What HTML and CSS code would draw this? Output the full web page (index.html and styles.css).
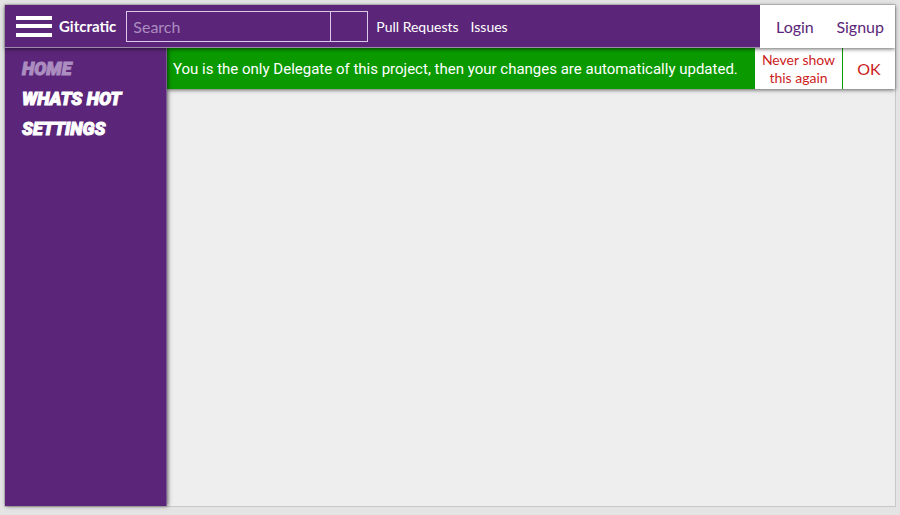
FILE: index.html
```html
<!DOCTYPE html>
<html lang="en">
<head>
<meta charset="utf-8">
<meta name="viewport" content="width=device-width, initial-scale=1">
<title>Gitcratic</title>
<link rel="stylesheet" href="styles.css">
</head>
<body>
<div class="app">
  <header class="topbar">
    <button class="menu" type="button" aria-label="Menu">
      <svg width="36" height="21" viewBox="0 0 36 21" aria-hidden="true"><path d="M0 0h36v4H0zM0 8h36v4H0zM0 17h36v4H0z" fill="#fff"/></svg>
    </button>
    <a class="brand" href="#">Gitcratic</a>
    <form class="search">
      <input type="search" placeholder="Search" aria-label="Search">
      <button type="submit" aria-label="Submit search"></button>
    </form>
    <nav class="links">
      <a href="#">Pull Requests</a>
      <a href="#">Issues</a>
    </nav>
    <div class="account">
      <a href="#">Login</a>
      <a href="#">Signup</a>
    </div>
  </header>
  <div class="body">
    <nav class="sidebar">
      <a class="current" href="#">HOME</a>
      <a href="#">WHATS HOT</a>
      <a href="#">SETTINGS</a>
    </nav>
    <main class="content">
      <div class="notice">
        <p>You is the only Delegate of this project, then your changes are automatically updated.</p>
        <button class="never" type="button">Never show this again</button>
        <button class="ok" type="button">OK</button>
      </div>
    </main>
  </div>
</div>
</body>
</html>
```
FILE: styles.css
```css
* {
  box-sizing: border-box;
}

body {
  margin: 0;
  min-height: 100vh;
  padding: 5px 5px 9px;
  display: flex;
  background: #e4e4e4;
  font-family: Lato, "Liberation Sans", sans-serif;
  font-size: 16px;
}

a {
  color: inherit;
  text-decoration: none;
}

button,
input {
  margin: 0;
  padding: 0;
  border: 0;
  border-radius: 0;
  background: none;
  color: inherit;
  font: inherit;
}

.app {
  flex: 1;
  min-width: 0;
  display: flex;
  flex-direction: column;
  background: #eee;
  box-shadow: 0 0 0 1px #c8c8c8;
}

.topbar {
  position: relative;
  z-index: 2;
  display: flex;
  align-items: center;
  height: 43px;
  padding-left: 11px;
  border-bottom: 1px solid #a08aac;
  background: #5b2679;
  color: #fff;
  box-shadow: 0 1px 4px rgba(0, 0, 0, 0.6);
}

.menu {
  display: flex;
}

.brand {
  margin: 0 10px 0 7px;
  font-weight: 700;
  font-size: 15px;
}

.search {
  display: flex;
  width: 242px;
  height: 31px;
  border: 1px solid #dcc8ea;
}

.search input {
  flex: 1;
  min-width: 0;
  padding: 0 6px;
  outline: 0;
}

.search input::placeholder {
  color: #ab8dc0;
  opacity: 1;
}

.search button {
  width: 37px;
  border-left: 1px solid #dcc8ea;
}

.links {
  display: flex;
  gap: 12px;
  margin-left: 8px;
  font-size: 14px;
}

.account {
  align-self: stretch;
  display: flex;
  align-items: center;
  justify-content: space-between;
  width: 135px;
  margin-left: auto;
  margin-bottom: -1px;
  padding: 0 11px 0 16px;
  background: #fff;
  color: #5b2679;
}

.body {
  flex: 1;
  display: flex;
}

.sidebar {
  position: relative;
  z-index: 1;
  flex: none;
  display: flex;
  flex-direction: column;
  width: 162px;
  padding: 6px 17px;
  border-right: 1px solid #7f5c94;
  background: #5b2679;
  color: #fff;
  box-shadow: 1px 0 4px rgba(0, 0, 0, 0.6);
  font: italic 900 18px/30px Roboto, "Liberation Sans", sans-serif;
  -webkit-text-stroke: 1px currentColor;
  white-space: nowrap;
}

.current {
  color: #ab8dc0;
}

.content {
  flex: 1;
  min-width: 0;
}

.notice {
  display: flex;
  height: 41px;
  background: #0a9a00;
  color: #fff;
  box-shadow: 0 1px 4px rgba(0, 0, 0, 0.6);
}

.notice p {
  flex: 1;
  min-width: 0;
  align-self: center;
  margin: 0;
  padding-left: 6px;
  font-family: Roboto, Lato, sans-serif;
  font-size: 15px;
  white-space: nowrap;
}

.never,
.ok {
  flex: none;
  background: #fff;
  color: #cc1c1c;
}

.never {
  width: 87px;
  font-size: 14px;
  line-height: 18px;
}

.ok {
  width: 52px;
  margin-left: 1px;
}
```
